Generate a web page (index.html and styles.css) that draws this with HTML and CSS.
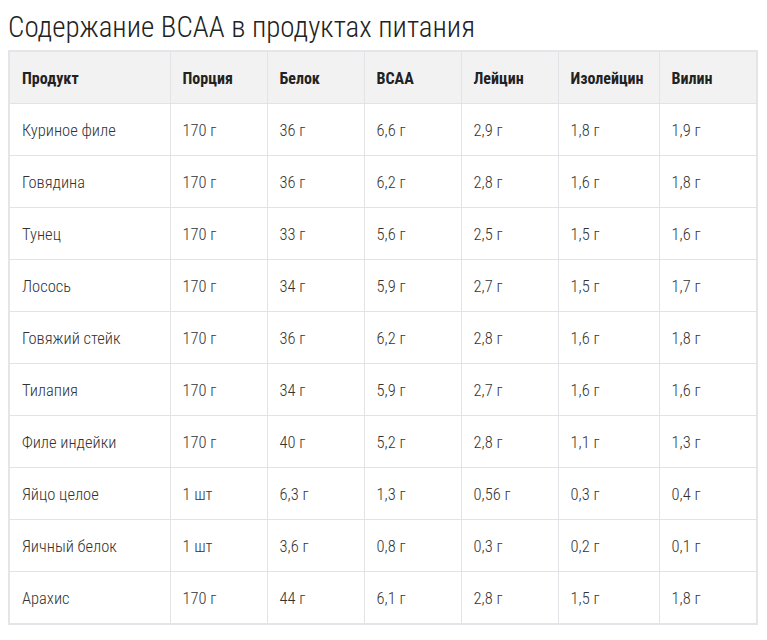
FILE: index.html
```html
<!DOCTYPE html>
<html lang="ru">
<head>
<meta charset="utf-8">
<title>Содержание BCAA в продуктах питания</title>
<link rel="stylesheet" href="styles.css">
</head>
<body>
<h2 class="title">Содержание BCAA в продуктах питания</h2>
<table class="bcaa">
<colgroup>
<col class="c1"><col class="c2"><col class="c3"><col class="c4"><col class="c5"><col class="c6"><col class="c7">
</colgroup>
<thead>
<tr><th>Продукт</th><th>Порция</th><th>Белок</th><th>BCAA</th><th>Лейцин</th><th>Изолейцин</th><th>Вилин</th></tr>
</thead>
<tbody>
<tr><td>Куриное филе</td><td>170 г</td><td>36 г</td><td>6,6 г</td><td>2,9 г</td><td>1,8 г</td><td>1,9 г</td></tr>
<tr><td>Говядина</td><td>170 г</td><td>36 г</td><td>6,2 г</td><td>2,8 г</td><td>1,6 г</td><td>1,8 г</td></tr>
<tr><td>Тунец</td><td>170 г</td><td>33 г</td><td>5,6 г</td><td>2,5 г</td><td>1,5 г</td><td>1,6 г</td></tr>
<tr><td>Лосось</td><td>170 г</td><td>34 г</td><td>5,9 г</td><td>2,7 г</td><td>1,5 г</td><td>1,7 г</td></tr>
<tr><td>Говяжий стейк</td><td>170 г</td><td>36 г</td><td>6,2 г</td><td>2,8 г</td><td>1,6 г</td><td>1,8 г</td></tr>
<tr><td>Тилапия</td><td>170 г</td><td>34 г</td><td>5,9 г</td><td>2,7 г</td><td>1,6 г</td><td>1,6 г</td></tr>
<tr><td>Филе индейки</td><td>170 г</td><td>40 г</td><td>5,2 г</td><td>2,8 г</td><td>1,1 г</td><td>1,3 г</td></tr>
<tr><td>Яйцо целое</td><td>1 шт</td><td>6,3 г</td><td>1,3 г</td><td>0,56 г</td><td>0,3 г</td><td>0,4 г</td></tr>
<tr><td>Яичный белок</td><td>1 шт</td><td>3,6 г</td><td>0,8 г</td><td>0,3 г</td><td>0,2 г</td><td>0,1 г</td></tr>
<tr><td>Арахис</td><td>170 г</td><td>44 г</td><td>6,1 г</td><td>2,8 г</td><td>1,5 г</td><td>1,8 г</td></tr>
</tbody>
</table>
</body>
</html>
```
FILE: styles.css
```css
html, body {
  margin: 0;
  padding: 0;
  background: #ffffff;
}
body {
  padding: 0 8px;
  font-family: "Roboto Condensed", "Liberation Sans Narrow", Roboto, "Liberation Sans", sans-serif;
  font-stretch: condensed;
  color: #333333;
}
.title {
  margin: 0;
  padding-top: 11px;
  height: 50px;
  box-sizing: border-box;
  font-size: 29px;
  line-height: 32px;
  font-weight: 300;
  color: #222222;
  white-space: nowrap;
}
.bcaa {
  width: 750px;
  border-collapse: collapse;
  table-layout: fixed;
  border: 2px solid #e3e5e8;
}
.c1 { width: 161px; }
.c2 { width: 97px; }
.c3 { width: 97px; }
.c4 { width: 97px; }
.c5 { width: 97px; }
.c6 { width: 101px; }
.c7 { width: 98px; }
.bcaa th, .bcaa td {
  border: 1px solid #e1e3e6;
  text-align: left;
  padding: 1px 0 0 12px;
  font-size: 16px;
  white-space: nowrap;
}
.bcaa th {
  height: 50px;
  background: #f2f2f2;
  font-weight: 700;
  color: #222222;
}
.bcaa td {
  height: 50px;
  font-size: 16.5px;
  font-weight: 300;
  color: #333333;
}
```
